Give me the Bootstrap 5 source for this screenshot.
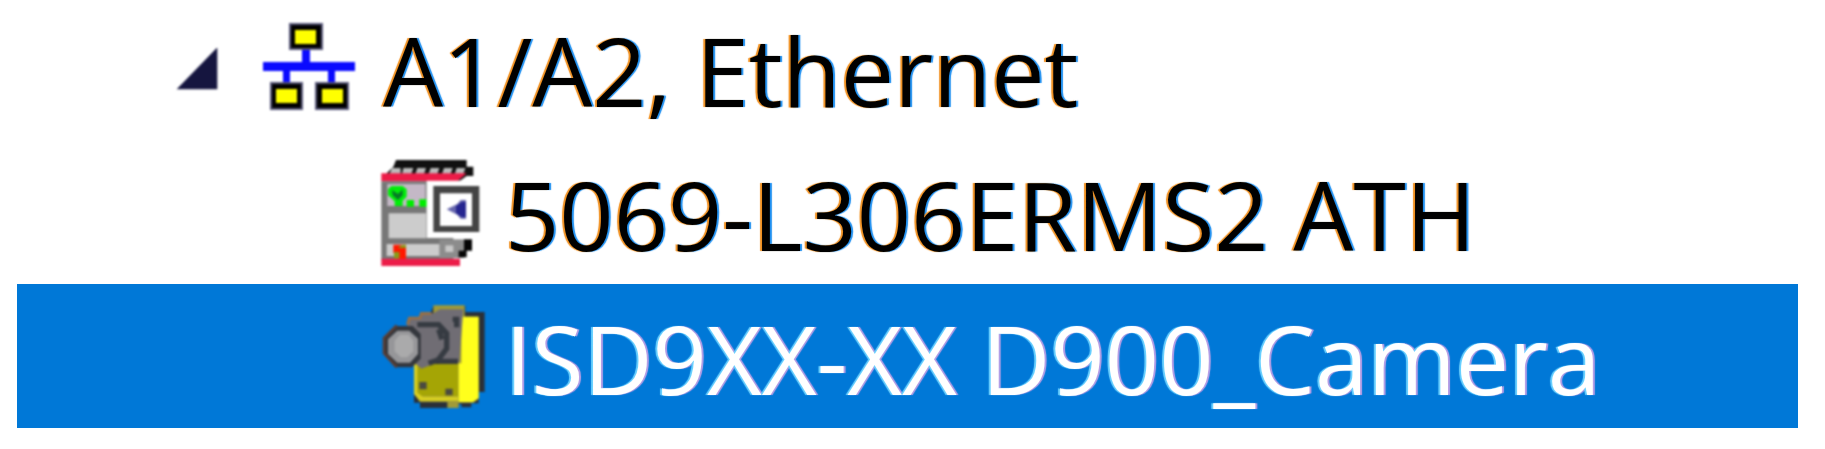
<!DOCTYPE html>
<html lang="en">
<head>
<meta charset="utf-8">
<meta name="viewport" content="width=device-width, initial-scale=1">
<title>Ethernet device tree</title>
<link href="https://cdn.jsdelivr.net/npm/bootstrap@5.3.0/dist/css/bootstrap.min.css" rel="stylesheet">
<style>
  body { background: #fff; color: #000; overflow: hidden; }
  .tree { margin: 0 27px 0 17px; font-family: "Open Sans", "Noto Sans", sans-serif; font-size: 95px; line-height: 140px; }
  .tree-row { white-space: nowrap; padding-top: 4px; text-shadow: -2px 0 1px #f09020, 2px 0 1px #2090f0; }
  .tree-root { padding-top: 0; padding-left: 159px; }
  .tree-leaf { padding-left: 364px; }
  .tree-row.selected { background: #0078d7; color: #fff; text-shadow: -2px 0 1px #6cd2ff, 2px 0 1px #b9a0e6; }
  .tree svg { display: block; flex: none; filter: blur(1px); }
  .toggle { margin-right: 45px; line-height: 1; }
  .net-icon { margin-right: 28px; margin-top: -6px; }
  .leaf-icon { margin-right: 20px; margin-top: -3px; }
</style>
</head>
<body>
<ul class="tree list-unstyled mb-0">
  <li class="tree-row tree-root d-flex align-items-center">
    <button class="toggle btn p-0 border-0" type="button" aria-label="Collapse A1/A2, Ethernet" aria-expanded="true">
      <svg width="42" height="44" viewBox="50 110 126 132"><path d="M52 234L174 108V234Z" fill="#15153f"/></svg>
    </button>
    <svg class="net-icon" width="92" height="88" viewBox="0 0 92 88" aria-hidden="true">
      <path d="M0 39H92V48H72V60H65V48H27V60H20V48H0ZM39 26H47V40H39Z" fill="#0a0aff"/>
      <path d="M26 0H60V27H26ZM7 59H40V87H7ZM52 59H86V87H52Z" fill="#555577"/>
      <path d="M28 2H58V25H28ZM9 61H38V85H9ZM54 61H84V85H54Z" fill="#000"/>
      <path d="M32 7H53V21H32ZM13 66H34V80H13ZM59 66H80V80H59Z" fill="#ff0"/>
    </svg>
    <span>A1/A2, Ethernet</span>
  </li>
  <li class="tree-row tree-leaf d-flex align-items-center">
    <svg class="leaf-icon" width="104" height="110" viewBox="33 24 312 330" aria-hidden="true">
      <path d="M78 30H290V50H310V78H290L270 92H50V70L70 50Z" fill="#111"/>
      <path d="M66 54H92V72H58ZM100 54H130L124 72H96ZM142 54H168L162 72H136ZM182 54H208L202 72H176ZM222 54H248L242 72H216ZM260 54H286L280 72H254Z" fill="#bbb"/>
      <path d="M34 70H290L262 94H34Z" fill="#ec1c48"/>
      <path d="M34 94H250V330H34Z" fill="#777"/>
      <path d="M52 102H166V168H52Z" fill="#c4b8c6"/>
      <path d="M56 190H168V265H56Z" fill="#ccc"/>
      <path d="M50 282H212V318H50Z" fill="#ccc"/>
      <path d="M208 268H282V324H208Z" fill="#8c8c8c"/>
      <path d="M226 286H250V306H226Z" fill="#c8c8c8"/>
      <path d="M282 268H306V302H290V322H266V302H282Z" fill="#050505"/>
      <path d="M54 118L64 108H98L110 118V140L98 152V168H74V154L54 136Z" fill="#00ee08"/>
      <path d="M66 120L84 132L98 118V136L84 150L68 136Z" fill="#087828"/>
      <path d="M110 150H132V170H110ZM148 148H172V170H148Z" fill="#0e0"/>
      <path d="M70 284H108V328H88L70 308Z" fill="#ff1800"/>
      <path d="M84 294H108V284L94 286ZM72 306H88V326H72Z" fill="#889c18"/>
      <path d="M34 326H270V348H34Z" fill="#ec1c48"/>
      <path d="M170 92H328V264H170Z" fill="#fff"/>
      <path d="M190 108H328V246H190Z" fill="#444"/>
      <path d="M210 130H306V228H210Z" fill="#fff"/>
      <path d="M230 178L262 162L272 150H288V206H272L262 194Z" fill="#6565ac"/>
      <path d="M258 168L276 156H288V202H276L258 190Z" fill="#252590"/>
    </svg>
    <span>5069-L306ERMS2 ATH</span>
  </li>
  <li class="tree-row tree-leaf selected d-flex align-items-center">
    <svg class="leaf-icon" width="104" height="106" viewBox="33 42 312 318" aria-hidden="true">
      <path d="M190 48H286V66H344V306H326V340H304V352H274V342H266V354H150V338H132V200Z" fill="#2b3038"/>
      <path d="M190 46H284V80H326V326L310 338H266V354H232V336H150L132 312V222H262V70H190Z" fill="#a09a38"/>
      <path d="M274 80H326V324L308 336H266V220H274Z" fill="#ffff1c"/>
      <path d="M142 222H264V318H154L142 306Z" fill="#a5a505"/>
      <path d="M132 222H142V308L158 320H264V332H150L132 312Z" fill="#d8cf20"/>
      <path d="M112 104L120 84H150V70H190L210 58H280L268 216H206L154 236L128 214Z" fill="#706d74"/>
      <path d="M112 104L118 84H150L154 70H184" fill="none" stroke="#9d7040" stroke-width="8"/>
      <path d="M142 104H206L230 130V176L204 210L176 220M248 88H260V112M206 214H264M206 118L216 148" fill="none" stroke="#363b42" stroke-width="16"/>
      <path d="M78 108H128L152 132V206L126 232H80L42 192V144Z" fill="#34373d"/>
      <path d="M80 106L42 144V190L80 232" fill="none" stroke="#5d3e32" stroke-width="8"/>
      <path d="M82 122H118L144 146V192L120 218H82L54 192V148Z" fill="#969699"/>
      <path d="M90 134H116L130 152V184L112 202H92L74 184V152Z" fill="#aaaaab"/>
      <path d="M148 276H170V298H148ZM226 296H248V316H226Z" fill="#4b4b40"/>
    </svg>
    <span>ISD9XX-XX D900_Camera</span>
  </li>
</ul>
<script src="https://cdn.jsdelivr.net/npm/bootstrap@5.3.0/dist/js/bootstrap.bundle.min.js"></script>
</body>
</html>
